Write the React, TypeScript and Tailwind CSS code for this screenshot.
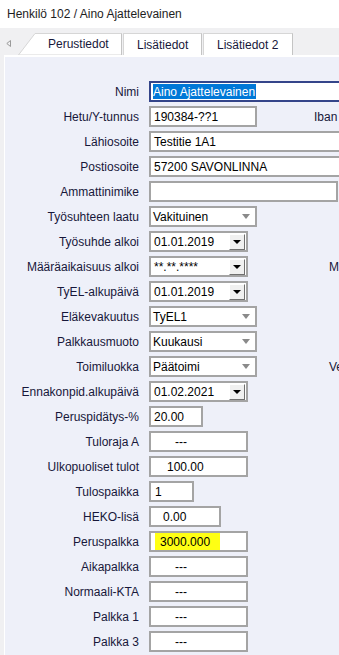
import React from "react";

const Box = ({ w, pl = 3, children, cls = "" }: { w: number; pl?: number; children?: React.ReactNode; cls?: string }) => (
  <div
    className={`h-[21px] shrink-0 border-2 border-[#a4a4a4] bg-white flex items-center text-black overflow-hidden whitespace-nowrap ${cls}`}
    style={{ width: w, paddingLeft: pl }}
  >
    {children}
  </div>
);

const Select = ({ value }: { value: string }) => (
  <div className="h-[21px] w-[108px] shrink-0 border-2 border-[#a4a4a4] bg-white flex items-center pl-[2px] pr-[5px] text-black">
    <span className="flex-1">{value}</span>
    <svg width="8" height="5" viewBox="0 0 8 5">
      <path d="M0 0 L8 0 L4 5 Z" fill="#8a8a8a" />
    </svg>
  </div>
);

const DateBox = ({ value }: { value: string }) => (
  <div className="h-[21px] w-[99px] shrink-0 border-2 border-[#a4a4a4] bg-white flex items-center pl-[3px] pr-[1px] text-black">
    <span className="flex-1 whitespace-nowrap">{value}</span>
    <div className="w-[16px] h-[16px] bg-[#f0f0f0] border border-t-white border-l-white border-r-[#707070] border-b-[#707070] flex items-center justify-center">
      <svg width="8" height="4" viewBox="0 0 8 4">
        <path d="M0 0 L8 0 L4 4 Z" fill="#000" />
      </svg>
    </div>
  </div>
);

const Row = ({ label, children }: { label: string; children: React.ReactNode }) => (
  <div className="h-[25px] flex items-center">
    <div className="w-[134px] shrink-0 text-right text-[#17173a] whitespace-nowrap">{label}</div>
    <div className="ml-[10px] flex items-center">{children}</div>
  </div>
);

export default function App() {
  return (
    <div className="w-[339px] h-[655px] overflow-hidden bg-white font-['Liberation_Sans',Arial,sans-serif] text-[12px] leading-none">
      <div className="h-[28px] flex items-center pl-[7px] text-[#1e1e1e]">Henkilö 102 / Aino Ajattelevainen</div>
      <div className="h-[27px] bg-[#f0f0f2] flex items-end">
        <div className="w-[18px] h-full flex items-center pl-[6px] pt-[3px]">
          <svg width="5" height="7" viewBox="0 0 5 7">
            <path d="M4.5 0.5 L0.8 3.5 L4.5 6.5 Z" fill="none" stroke="#9a9a9a" strokeWidth="1" />
          </svg>
        </div>
        <div className="relative w-[104px] h-[22px] flex items-center pl-[30px] text-[#17173a]">
          <svg className="absolute inset-0" width="104" height="22" viewBox="0 0 104 22">
            <path d="M0.5 22 L17 0.5 L103.5 0.5 L103.5 22 Z" fill="#fff" stroke="#d6d6d6" />
            <path d="M103.5 0.5 L103.5 22" stroke="#c4c4c4" />
          </svg>
          <span className="relative">Perustiedot</span>
        </div>
        <div className="ml-[1px] w-[79px] h-[22px] bg-white border border-[#d6d6d6] border-r-[#c4c4c4] border-b-0 flex items-center pl-[13px] text-[#17173a]">Lisätiedot</div>
        <div className="ml-[1px] w-[90px] h-[22px] bg-white border border-[#d6d6d6] border-r-[#c4c4c4] border-b-0 flex items-center pl-[13px] text-[#17173a]">Lisätiedot 2</div>
      </div>
      <div className="h-[600px] bg-[#f0f0f2] pl-[4px]">
        <div className="h-full w-[400px] bg-[#eef0f9] border-l border-t-2 border-white pt-[22px]">
          <Row label="Nimi">
            <div className="h-[21px] w-[200px] border-2 border-[#34458a] bg-white flex items-center pl-[2px]">
              <span className="bg-[#0078d7] text-white h-[15px] flex items-center pr-[1px]">Aino Ajattelevainen</span>
            </div>
          </Row>
          <Row label="Hetu/Y-tunnus">
            <Box w={108}>190384-??1</Box>
            <span className="ml-[57px] text-[#17173a] whitespace-nowrap">Iban</span>
          </Row>
          <Row label="Lähiosoite">
            <Box w={200}>Testitie 1A1</Box>
          </Row>
          <Row label="Postiosoite">
            <Box w={200}>57200 SAVONLINNA</Box>
          </Row>
          <Row label="Ammattinimike">
            <Box w={189} />
          </Row>
          <Row label="Työsuhteen laatu">
            <Select value="Vakituinen" />
          </Row>
          <Row label="Työsuhde alkoi">
            <DateBox value="01.01.2019" />
          </Row>
          <Row label="Määräaikaisuus alkoi">
            <DateBox value="**.**.****" />
            <span className="ml-[81px] text-[#17173a] whitespace-nowrap">M</span>
          </Row>
          <Row label="TyEL-alkupäivä">
            <DateBox value="01.01.2019" />
          </Row>
          <Row label="Eläkevakuutus">
            <Select value="TyEL1" />
          </Row>
          <Row label="Palkkausmuoto">
            <Select value="Kuukausi" />
          </Row>
          <Row label="Toimiluokka">
            <Select value="Päätoimi" />
            <span className="ml-[72px] text-[#17173a] whitespace-nowrap">Ve</span>
          </Row>
          <Row label="Ennakonpid.alkupäivä">
            <DateBox value="01.02.2021" />
          </Row>
          <Row label="Peruspidätys-%">
            <Box w={54}>20.00</Box>
          </Row>
          <Row label="Tuloraja A">
            <Box w={99} pl={24}>---</Box>
          </Row>
          <Row label="Ulkopuoliset tulot">
            <Box w={99} pl={16}>100.00</Box>
          </Row>
          <Row label="Tulospaikka">
            <Box w={45} pl={4}>1</Box>
          </Row>
          <Row label="HEKO-lisä">
            <Box w={72} pl={12}>0.00</Box>
          </Row>
          <Row label="Peruspalkka">
            <Box w={99} pl={4}>
              <span className="h-[19px] w-[65px] bg-[#ffff14] flex items-center pl-[5px]">3000.000</span>
            </Box>
          </Row>
          <Row label="Aikapalkka">
            <Box w={99} pl={24}>---</Box>
          </Row>
          <Row label="Normaali-KTA">
            <Box w={99} pl={24}>---</Box>
          </Row>
          <Row label="Palkka 1">
            <Box w={99} pl={24}>---</Box>
          </Row>
          <Row label="Palkka 3">
            <Box w={99} pl={24}>---</Box>
          </Row>
        </div>
      </div>
    </div>
  );
}
